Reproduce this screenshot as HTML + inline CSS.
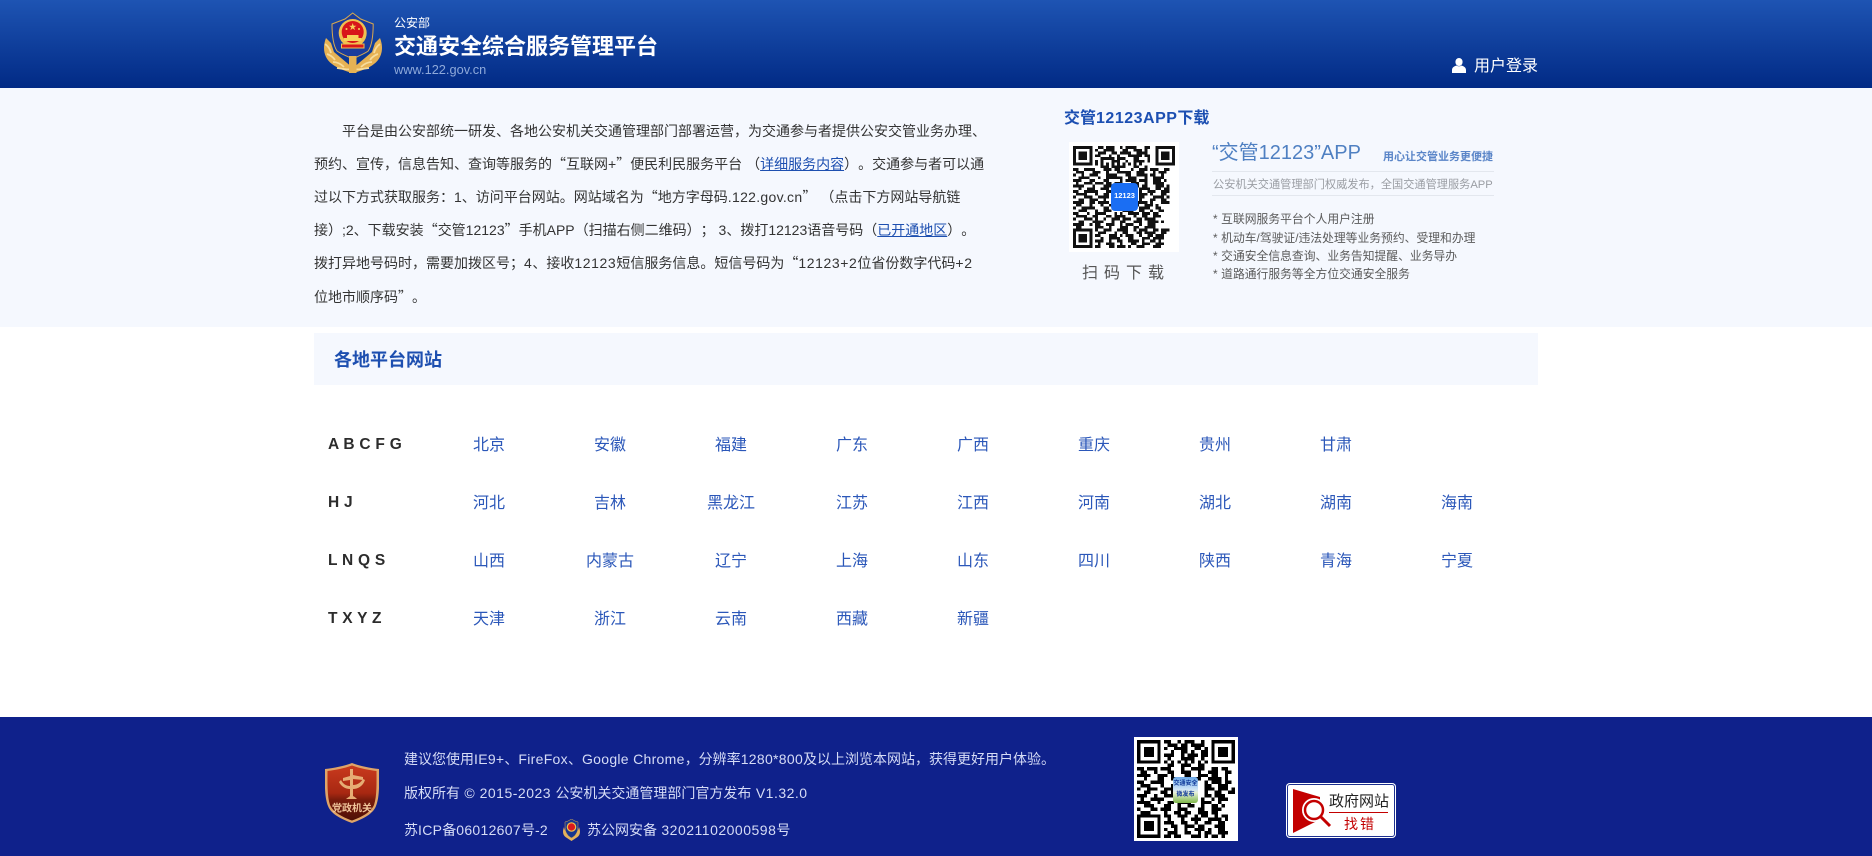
<!DOCTYPE html>
<html lang="zh-CN">
<head>
<meta charset="utf-8">
<title>交通安全综合服务管理平台</title>
<style>
*{margin:0;padding:0;box-sizing:border-box;text-spacing-trim:space-all}
html,body{width:1872px;height:856px;overflow:hidden;background:#fff}
body{position:relative;font-family:"Liberation Sans","Noto Sans CJK SC",sans-serif;color:#333}
.a{position:absolute;white-space:nowrap}
a{color:inherit}
.q{font-family:"Noto Sans CJK SC",sans-serif}
.e{letter-spacing:.5px}
.g{letter-spacing:.3px}
.h{letter-spacing:.6px}
#hd{left:0;top:0;width:1872px;height:88px;background:linear-gradient(#1e54b3,#012a85)}
#band{left:0;top:88px;width:1872px;height:239px;background:#f5f8fe}
#sec{left:314px;top:333px;width:1224px;height:52px;background:#f5f8fe}
#ft{left:0;top:717px;width:1872px;height:139px;background:#0f218b}
.c{font-size:16px;line-height:24px;color:#2b57b9;width:100px;text-align:center}
.l{font-size:15.500px;font-weight:bold;line-height:24px;color:#2c2c2c;left:328px;word-spacing:.5px}
.f{font-size:14px;line-height:20px;color:#d6dcf6;left:404px}
.b{font-size:11.800px;line-height:18px;color:#5a5a5a;left:1213px;filter:blur(.25px);word-spacing:-1.500px}
</style>
</head>
<body>
<div class="a" id="hd"></div>
<svg class="a" style="left:323px;top:12px" width="59" height="62" viewBox="0 0 59 62">
<path d="M3 26C-1 36 1 46 9 52c5 4 13 7 20.700 9C38 59 46 56 51 52c8-6 10-16 6-26l-5 5-3 9-19 16-19-16-3-9z" fill="#e6b254"/>
<path d="M2 32c3 2 5 5 6 9M4 42c3 1 6 3 8 6M10 50c4 0 8 2 11 5M57 32c-3 2-5 5-6 9M55 42c-3 1-6 3-8 6M49 50c-4 0-8 2-11 5M14 56c10 2 21 2 32 0" stroke="#f6dc9c" stroke-width="1.800" fill="none"/>
<path d="M29.700 1l8 6 12.500 5c0 12-1 21-5 27-4 3-10 5-15.500 8C24 44 18 42 14 39 10 33 9 24 9 12l13-5z" fill="#1a3c9c" stroke="#d9a94e" stroke-width="1"/>
<circle cx="29.700" cy="21" r="14" fill="#f0c050"/>
<circle cx="29.700" cy="20" r="11" fill="#d8161a"/>
<path d="M29.700 11l.9 2.700h2.800l-2.300 1.700.9 2.700-2.300-1.700-2.300 1.700.9-2.700-2.300-1.700h2.800z" fill="#f7d25a"/>
<circle cx="23.500" cy="17" r="1" fill="#f7d25a"/><circle cx="36" cy="17" r="1" fill="#f7d25a"/>
<path d="M21 26h17.500v3H21zM24 23h11.500v3H24z" fill="#f7d25a"/>
<path d="M18.500 32h22.500v4H18.500z" fill="#d8161a" stroke="#f0c050"/>
<path d="M26 44h7.500v17h-7.500z" fill="#e6b254"/>
</svg>
<div class="a" style="left:394px;top:14px;font-size:12px;line-height:18px;color:#fff">公安部</div>
<div class="a" style="left:394px;top:33px;font-size:22px;line-height:28px;font-weight:bold;color:#fff">交通安全综合服务管理平台</div>
<div class="a" style="left:394px;top:61px;font-size:12.800px;line-height:18px;color:#8ea9da">www.122.gov.cn</div>
<svg class="a" style="left:1452px;top:58px" width="14" height="15" viewBox="0 0 14 15"><ellipse cx="7" cy="4" rx="3.600" ry="4" fill="#fff"/><path d="M0 15v-3c0-3 3-4 4.500-4.500C5.500 8.500 8.500 8.500 9.500 7.500 11 8 14 9 14 12v3z" fill="#fff"/></svg>
<div class="a" style="left:1474px;top:55px;font-size:16px;line-height:24px;color:#fff">用户登录</div>

<div class="a" id="band"></div>
<div class="a" style="left:314px;top:114.500px;font-size:14px;line-height:33.200px;color:#333">
<span style="display:inline-block;width:28px"></span>平台是由公安部统一研发、各地公安机关交通管理部门部署运营，为交通参与者提供公安交管业务办理、<br>
预约、宣传，信息告知、查询等服务的<span class="q">“</span>互联网+<span class="q">”</span>便民利民服务平台 （<a href="#" style="color:#1d4fb0">详细服务内容</a>）。交通参与者可以通<br>
过以下方式获取服务：1、访问平台网站。网站域名为<span class="q">“</span>地方字母码<span class="g">.122.gov.cn</span><span class="q">”</span> （点击下方网站导航链<br>
接）;2、下载安装<span class="q">“</span>交管12123<span class="q">”</span>手机APP（扫描右侧二维码）； 3、拨打12123语音号码（<a href="#" style="color:#1d4fb0">已开通地区</a>）。<br>
拨打异地号码时，需要加拨区号；<span class="h">4</span>、接收<span class="h">12123</span>短信服务信息。短信号码为<span class="q">“</span><span class="h">12123+2</span>位省份数字代码<span class="h">+2</span><br>
位地市顺序码<span class="q">”</span>。
</div>
<div class="a" style="left:1064px;top:107px;font-size:16px;line-height:24px;font-weight:bold;color:#1c4fb2">交管<span style="letter-spacing:.5px">12123APP</span>下载</div>
<div class="a" style="left:1069px;top:142px;width:110px;height:110px;background:#fff"></div>
<svg class="a" style="left:1073px;top:146px;filter:blur(.35px)" width="102" height="102" viewBox="0 0 37 37" shape-rendering="crispEdges">
<path fill="#111" fill-rule="evenodd" d="M0 0h7v7H0zM1 1v5h5V1zM2 2h3v3H2zM30 0h7v7h-7zM31 1v5h5V1zM32 2h3v3h-3zM0 30h7v7H0zM1 31v5h5v-5zM2 32h3v3H2z"/>
<path fill="none" stroke="#111" d="M9 .5h2m1 0h3m2 0h1m1 0h4m3 0h2
M8 1.500h1m2 0h4m3 0h2m2 0h3m1 0h1
M9 2.500h3m2 0h2m1 0h4m2 0h4
M8 3.500h2m3 0h1m2 0h1m3 0h5m1 0h2
M10 4.500h5m1 0h3m3 0h2m3 0h1
M8 5.500h1m1 0h1m3 0h3m2 0h1m2 0h4m1 0h1
M8 6.500h1m1 0h1m1 0h1m1 0h1m1 0h1m1 0h1m1 0h1m1 0h1m1 0h1
M10 7.500h3m1 0h5m3 0h2m2 0h1
M0 8.500h2m2 0h4m3 0h3m1 0h2m4 0h1m2 0h3m1 0h3m2 0h2
M1 9.500h3m3 0h3m2 0h1m3 0h5m2 0h3m3 0h1m1 0h3
M0 10.500h1m2 0h1m2 0h3m3 0h4m3 0h2m2 0h4m1 0h2m2 0h1
M2 11.500h4m3 0h1m2 0h6m2 0h3m3 0h1m2 0h4
M0 12.500h3m3 0h2m3 0h2m4 0h1m1 0h4m1 0h3m2 0h3m1 0h1
M1 13.500h1m2 0h3m1 0h3m1 0h2m1 0h3m3 0h3m2 0h1m2 0h4
M0 14.500h4m3 0h1m3 0h4m7 0h2m1 0h2m3 0h3m1 0h1
M2 15.500h1m2 0h3m2 0h3m2 0h1m8 0h4m2 0h2m1 0h2
M0 16.500h2m2 0h5m3 0h3m9 0h1m2 0h3m2 0h3
M1 17.500h4m3 0h1m2 0h2m1 0h1m9 0h3m1 0h1m3 0h2
M0 18.500h1m3 0h3m2 0h4m2 0h1m8 0h2m3 0h4m1 0h1
M2 19.500h2m2 0h3m2 0h1m3 0h2m7 0h1m3 0h2m2 0h2
M0 20.500h4m2 0h2m1 0h4m2 0h1m7 0h4m1 0h1m3 0h3
M1 21.500h2m3 0h1m3 0h1m2 0h4m2 0h5m2 0h3m1 0h1
M0 22.500h1m2 0h5m3 0h2m2 0h2m1 0h1m3 0h1m1 0h4m2 0h2
M2 23.500h3m3 0h1m2 0h3m4 0h4m2 0h2m2 0h1m2 0h2
M0 24.500h2m3 0h1m2 0h4m3 0h1m1 0h1m2 0h4m1 0h3m1 0h2
M1 25.500h4m2 0h2m3 0h2m1 0h4m3 0h1m2 0h2m2 0h3
M0 26.500h1m3 0h3m1 0h1m2 0h1m2 0h3m1 0h3m2 0h2m1 0h4
M2 27.500h2m3 0h4m3 0h1m2 0h2m3 0h3m2 0h4m1 0h1
M0 28.500h4m2 0h1m1 0h2m2 0h3m2 0h1m1 0h3m2 0h1m2 0h3
M1 29.500h2m5 0h3m2 0h1m3 0h3m2 0h2m2 0h4
M8 30.500h1m2 0h3m2 0h4m2 0h1m1 0h3m2 0h2m1 0h3
M9 31.500h3m3 0h1m2 0h2m3 0h2m1 0h4m2 0h2
M8 32.500h2m3 0h3m1 0h1m1 0h3m2 0h1m2 0h2m1 0h3
M10 33.500h1m2 0h4m3 0h2m3 0h3m1 0h4
M8 34.500h3m2 0h1m2 0h2m2 0h4m1 0h1m2 0h2m1 0h1
M9 35.500h1m2 0h3m2 0h1m3 0h2m2 0h3m2 0h3
M8 36.500h2m3 0h2m1 0h3m1 0h1m2 0h3m3 0h3"/>
</svg>
<div class="a" style="left:1111px;top:183px;width:27px;height:28px;background:#1a6ef3;border-radius:4px;color:#fff;text-align:center;font-size:7.500px;font-weight:bold;line-height:26px">12123</div>
<div class="a" style="left:1082px;top:263px;font-size:16px;line-height:22px;letter-spacing:6px;color:#555">扫码下载</div>

<div class="a" style="left:1212px;top:139px;font-size:20px;line-height:28px;color:#4f80c2">“交管12123”APP</div>
<div class="a" style="left:1383px;top:148px;font-size:11px;line-height:18px;font-weight:bold;color:#5a85c8">用心让交管业务更便捷</div>
<div class="a" style="left:1212px;top:171px;width:282px;height:1px;background:#e3e7ee"></div>
<div class="a" style="left:1213px;top:176px;font-size:11.200px;line-height:18px;color:#9a9da3">公安机关交通管理部门权威发布，全国交通管理服务APP</div>
<div class="a" style="left:1212px;top:195px;width:282px;height:1px;background:#e3e7ee"></div>
<div class="a b" style="top:210px">* &nbsp;互联网服务平台个人用户注册</div>
<div class="a b" style="top:229px">* &nbsp;机动车/驾驶证/违法处理等业务预约、受理和办理</div>
<div class="a b" style="top:247px">* &nbsp;交通安全信息查询、业务告知提醒、业务导办</div>
<div class="a b" style="top:265px">* &nbsp;道路通行服务等全方位交通安全服务</div>

<div class="a" id="sec"></div>
<div class="a" style="left:334px;top:347px;font-size:18px;line-height:27px;font-weight:bold;color:#1d4fb0">各地平台网站</div>

<div class="a l" style="top:433px">A B C F G</div>
<div class="a c" style="left:439px;top:434px">北京</div><div class="a c" style="left:560px;top:434px">安徽</div><div class="a c" style="left:681px;top:434px">福建</div><div class="a c" style="left:802px;top:434px">广东</div><div class="a c" style="left:923px;top:434px">广西</div><div class="a c" style="left:1044px;top:434px">重庆</div><div class="a c" style="left:1165px;top:434px">贵州</div><div class="a c" style="left:1286px;top:434px">甘肃</div>

<div class="a l" style="top:491px">H J</div>
<div class="a c" style="left:439px;top:492px">河北</div><div class="a c" style="left:560px;top:492px">吉林</div><div class="a c" style="left:681px;top:492px">黑龙江</div><div class="a c" style="left:802px;top:492px">江苏</div><div class="a c" style="left:923px;top:492px">江西</div><div class="a c" style="left:1044px;top:492px">河南</div><div class="a c" style="left:1165px;top:492px">湖北</div><div class="a c" style="left:1286px;top:492px">湖南</div><div class="a c" style="left:1407px;top:492px">海南</div>

<div class="a l" style="top:549px">L N Q S</div>
<div class="a c" style="left:439px;top:550px">山西</div><div class="a c" style="left:560px;top:550px">内蒙古</div><div class="a c" style="left:681px;top:550px">辽宁</div><div class="a c" style="left:802px;top:550px">上海</div><div class="a c" style="left:923px;top:550px">山东</div><div class="a c" style="left:1044px;top:550px">四川</div><div class="a c" style="left:1165px;top:550px">陕西</div><div class="a c" style="left:1286px;top:550px">青海</div><div class="a c" style="left:1407px;top:550px">宁夏</div>

<div class="a l" style="top:607px">T X Y Z</div>
<div class="a c" style="left:439px;top:608px">天津</div><div class="a c" style="left:560px;top:608px">浙江</div><div class="a c" style="left:681px;top:608px">云南</div><div class="a c" style="left:802px;top:608px">西藏</div><div class="a c" style="left:923px;top:608px">新疆</div>

<div class="a" id="ft"></div>
<svg class="a" style="left:325px;top:763px" width="54" height="62" viewBox="0 0 54 62">
<defs><linearGradient id="g1" x1="0" y1="0" x2="0" y2="1"><stop offset="0" stop-color="#c93a1e"/><stop offset=".5" stop-color="#a82812"/><stop offset=".62" stop-color="#7a1c0c"/><stop offset="1" stop-color="#4e0f06"/></linearGradient></defs>
<path d="M27 0c8 3 18 5 27 6 0 12 1 27-3 37-3 8-13 13-24 17C16 56 6 51 3 43-1 33 0 18 0 6c9-1 19-3 27-6z" fill="#dfa468"/>
<path d="M27 2.500c8 3 17 4.500 24.500 5.500 0 11 .5 25-2.500 34-3 7-12 12-22 15.500C17 54 8 49 5 42 2 33 2.500 19 2.500 8 10 7 19 5.500 27 2.500z" fill="url(#g1)"/>
<path d="M25 6h3v6l10 2v3l-10-1v6c5 0 8-3 10-6l2 1c-2 6-7 9-12 9v7c2 1 3 2 4 3H21c1-1 3-2 4-3v-7c-5 0-9-3-11-7l2-2c2 4 5 6 9 6v-6l-7 1v-3l7-2z" fill="#e6ad75"/>
<text x="27" y="48.500" font-size="10" font-weight="bold" fill="#f0c49a" text-anchor="middle" font-family="Noto Sans CJK SC,sans-serif">党政机关</text>
</svg>
<div class="a f" style="top:749px">建议您使用<span class="g">IE9+</span>、<span class="g">FireFox</span>、<span class="g">Google Chrome</span>，分辨率<span class="g">1280*800</span>及以上浏览本网站，获得更好用户体验。</div>
<div class="a f" style="top:783px">版权所有<span class="e"> © 2015-2023 </span>公安机关交通管理部门官方发布<span class="e"> V1.32.0</span></div>
<div class="a f" style="top:820px">苏<span class="g">ICP</span>备<span class="g">06012607</span>号<span class="g">-2</span></div>
<svg class="a" style="left:562px;top:819px" width="19" height="22" viewBox="0 0 19 22">
<path d="M2 8C0 13 1 17 5 19l4.500 3L14 19c4-2 5-6 3-11-1 4-3 8-7.500 11C5 16 3 12 2 8z" fill="#e2b15c"/>
<path d="M9.500 0L13 2l3 1c0 6 0 9-2 12-1 2-3 3-4.500 4C8 18 6 17 5 15 3 12 3 9 3 3l3-1z" fill="#17368f" stroke="#d9a94e" stroke-width=".5"/>
<circle cx="9.500" cy="8" r="4.800" fill="#f0c050"/><circle cx="9.500" cy="8" r="3.600" fill="#d8181c"/>
</svg>
<div class="a f" style="left:587px;top:820px">苏公网安备<span class="e"> 32021102000598</span>号</div>

<div class="a" style="left:1134px;top:737px;width:104px;height:104px;background:#fff"></div>
<svg class="a" style="left:1137px;top:740px" width="98" height="98" viewBox="0 0 29 29" shape-rendering="crispEdges">
<path fill="#000" fill-rule="evenodd" d="M0 0h7v7H0zM1 1v5h5V1zM2 2h3v3H2zM22 0h7v7h-7zM23 1v5h5V1zM24 2h3v3h-3zM0 22h7v7H0zM1 23v5h5v-5zM2 24h3v3H2z"/>
<path fill="none" stroke="#000" d="M8 .5h2m2 0h1m1 0h3m2 0h1
M9 1.500h3m1 0h2m1 0h4
M8 2.500h1m2 0h4m2 0h2m1 0h1
M10 3.500h1m2 0h2m1 0h1m2 0h2
M8 4.500h3m2 0h1m1 0h3m1 0h2
M9 5.500h1m3 0h4m2 0h1
M8 6.500h1m1 0h1m1 0h1m1 0h1m1 0h1m1 0h1m1 0h1
M9 7.500h2m2 0h3m2 0h2
M0 8.500h2m1 0h3m1 0h3m3 0h1m2 0h4m2 0h2m1 0h2
M1 9.500h2m2 0h1m3 0h2m2 0h3m2 0h1m2 0h3m2 0h2
M0 10.500h4m2 0h3m1 0h1m3 0h2m2 0h3m1 0h2m2 0h1
M2 11.500h1m3 0h2m2 0h3m1 0h1m2 0h2m2 0h4m1 0h1
M0 12.500h2m2 0h4m3 0h1m8 0h1m1 0h3m1 0h2
M1 13.500h3m3 0h1m2 0h1m9 0h2m2 0h3
M0 14.500h1m2 0h3m2 0h3m9 0h3m1 0h3m1 0h1
M2 15.500h2m3 0h2m1 0h1m9 0h1m2 0h2m2 0h2
M0 16.500h3m2 0h1m2 0h3m9 0h2m1 0h3
M1 17.500h1m2 0h4m3 0h1m2 0h2m3 0h1m2 0h1m1 0h3
M0 18.500h4m2 0h1m2 0h2m1 0h4m3 0h3m2 0h1
M2 19.500h3m3 0h2m2 0h1m2 0h2m2 0h1m2 0h2m1 0h1
M0 20.500h1m3 0h2m1 0h3m2 0h3m3 0h2m2 0h3
M1 21.500h3m4 0h1m2 0h2m1 0h2m2 0h3m1 0h2
M8 22.500h2m2 0h3m2 0h1m1 0h2m2 0h1m1 0h2
M9 23.500h1m3 0h1m2 0h3m2 0h4m1 0h1
M8 24.500h3m2 0h2m2 0h1m2 0h2m2 0h2
M10 25.500h2m2 0h3m1 0h2m3 0h3
M8 26.500h1m2 0h1m2 0h1m2 0h3m1 0h1m2 0h2
M9 27.500h3m2 0h2m2 0h1m1 0h2m2 0h3
M8 28.500h2m1 0h2m3 0h3m1 0h1m1 0h2m1 0h1"/>
</svg>
<div class="a" style="left:1173px;top:777px;width:25px;height:26px;border-radius:3px;background:linear-gradient(#6aa8e8 0,#cfe4f7 48%,#e8f0d8 60%,#7fb84a 100%);color:#123a9a;text-align:center;font-size:6px;line-height:11px;font-weight:bold;padding-top:2px">交通安全<br>微发布</div>

<div class="a" style="left:1286px;top:783px;width:110px;height:55px;background:#fff;box-shadow:inset 0 0 0 1px #fff,inset 0 0 0 2px #1b2f8f;border-radius:4px"></div>
<svg class="a" style="left:1293px;top:789px" width="40" height="44" viewBox="0 0 40 44">
<path d="M0 0l27 8v16l-3 8-24 12z" fill="#c30000"/>
<circle cx="21" cy="21" r="12" fill="#fff"/>
<circle cx="21" cy="21" r="9" fill="#fff" stroke="#c30000" stroke-width="2.500"/>
<path d="M28 28l9 9" stroke="#c30000" stroke-width="3"/>
</svg>
<div class="a" style="left:1329px;top:791px;font-size:15px;line-height:22px;color:#222">政府网站</div>
<div class="a" style="left:1329px;top:812px;width:59px;height:1px;background:#c30000"></div>
<div class="a" style="left:1344px;top:814px;font-size:14px;line-height:20px;letter-spacing:2px;color:#c30000">找错</div>
</body>
</html>
